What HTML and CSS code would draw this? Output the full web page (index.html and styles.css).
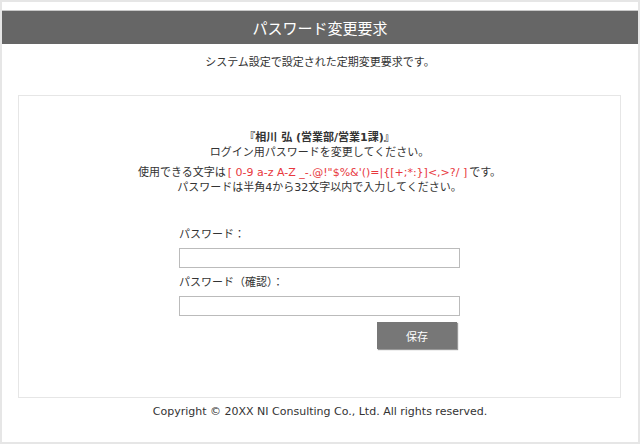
FILE: index.html
```html
<!DOCTYPE html>
<html>
<head>
<meta charset="utf-8">
<title>パスワード変更要求</title>
<link rel="stylesheet" href="styles.css">
</head>
<body>
<div class="frame">
	<div class="header">パスワード変更要求</div>
	<p class="lead">システム設定で設定された定期変更要求です。</p>

	<div class="card">
		<p class="msg">
			<b>『相川 弘 (営業部/営業1課)』</b><br>
			ログイン用パスワードを変更してください。
		</p>
		<p class="msg">
			使用できる文字は<span class="chars">[ 0-9 a-z A-Z _-.@!"$%&amp;'()=|{[+;*:}]&lt;,&gt;?/ ]</span>です。<br>
			パスワードは半角4から32文字以内で入力してください。
		</p>

		<div class="form">
			<label for="pw1">パスワード：</label>
			<input id="pw1" type="password">
			<label for="pw2">パスワード（確認）：</label>
			<input id="pw2" type="password">
			<div class="actions">
				<button class="save">保存</button>
			</div>
		</div>
	</div>

	<p class="copy">Copyright © 20XX NI Consulting Co., Ltd. All rights reserved.</p>
</div>
</body>
</html>
```

FILE: styles.css
```css
html, body {
	margin: 0;
	padding: 0;
	background-color: white;
}
body {
	font-family: "DejaVu Sans", "Noto Sans CJK JP", sans-serif;
	font-size: 11px;
	color: #333;
}
.frame {
	box-sizing: border-box;
	width: 640px;
	height: 444px;
	border: 2px solid #e6e6e6;
	padding-top: 8px;
}
.header {
	height: 33px;
	line-height: 33px;
	background-color: #666;
	border-top: 1px solid #c8c8c8;
	color: white;
	font-family: "Noto Sans CJK JP", sans-serif;
	font-size: 15px;
	text-align: center;
}
.lead {
	margin: 11px 0 0 0;
	line-height: 16px;
	text-align: center;
}
.card {
	margin: 24px 17px 0 16px;
	height: 303px;
	border: 1px solid #e6e6e6;
	box-sizing: border-box;
	padding-top: 34px;
}
.msg {
	margin: 0 0 5px 0;
	line-height: 15px;
	text-align: center;
}
.msg b {
	font-weight: bold;
}
.chars {
	color: #e8383d;
	padding: 0 2px;
}
.form {
	width: 281px;
	margin: 33px auto 0 auto;
}
.form label {
	display: block;
	line-height: 14px;
	margin-bottom: 6px;
}
.form input {
	display: block;
	box-sizing: border-box;
	width: 281px;
	height: 20px;
	margin: 0 0 8px 0;
	border: 1px solid #bbb;
	padding: 0 4px;
}
.actions {
	display: flex;
	justify-content: flex-end;
	padding-right: 3px;
	margin-top: -2px;
}
.save {
	width: 80px;
	height: 27px;
	border: none;
	background-color: #777;
	color: white;
	font-family: "Noto Sans CJK JP", sans-serif;
	font-size: 11px;
	box-shadow: 1px 1px 1px #999;
}
.copy {
	margin: 6px 0 0 0;
	line-height: 16px;
	text-align: center;
}
```
